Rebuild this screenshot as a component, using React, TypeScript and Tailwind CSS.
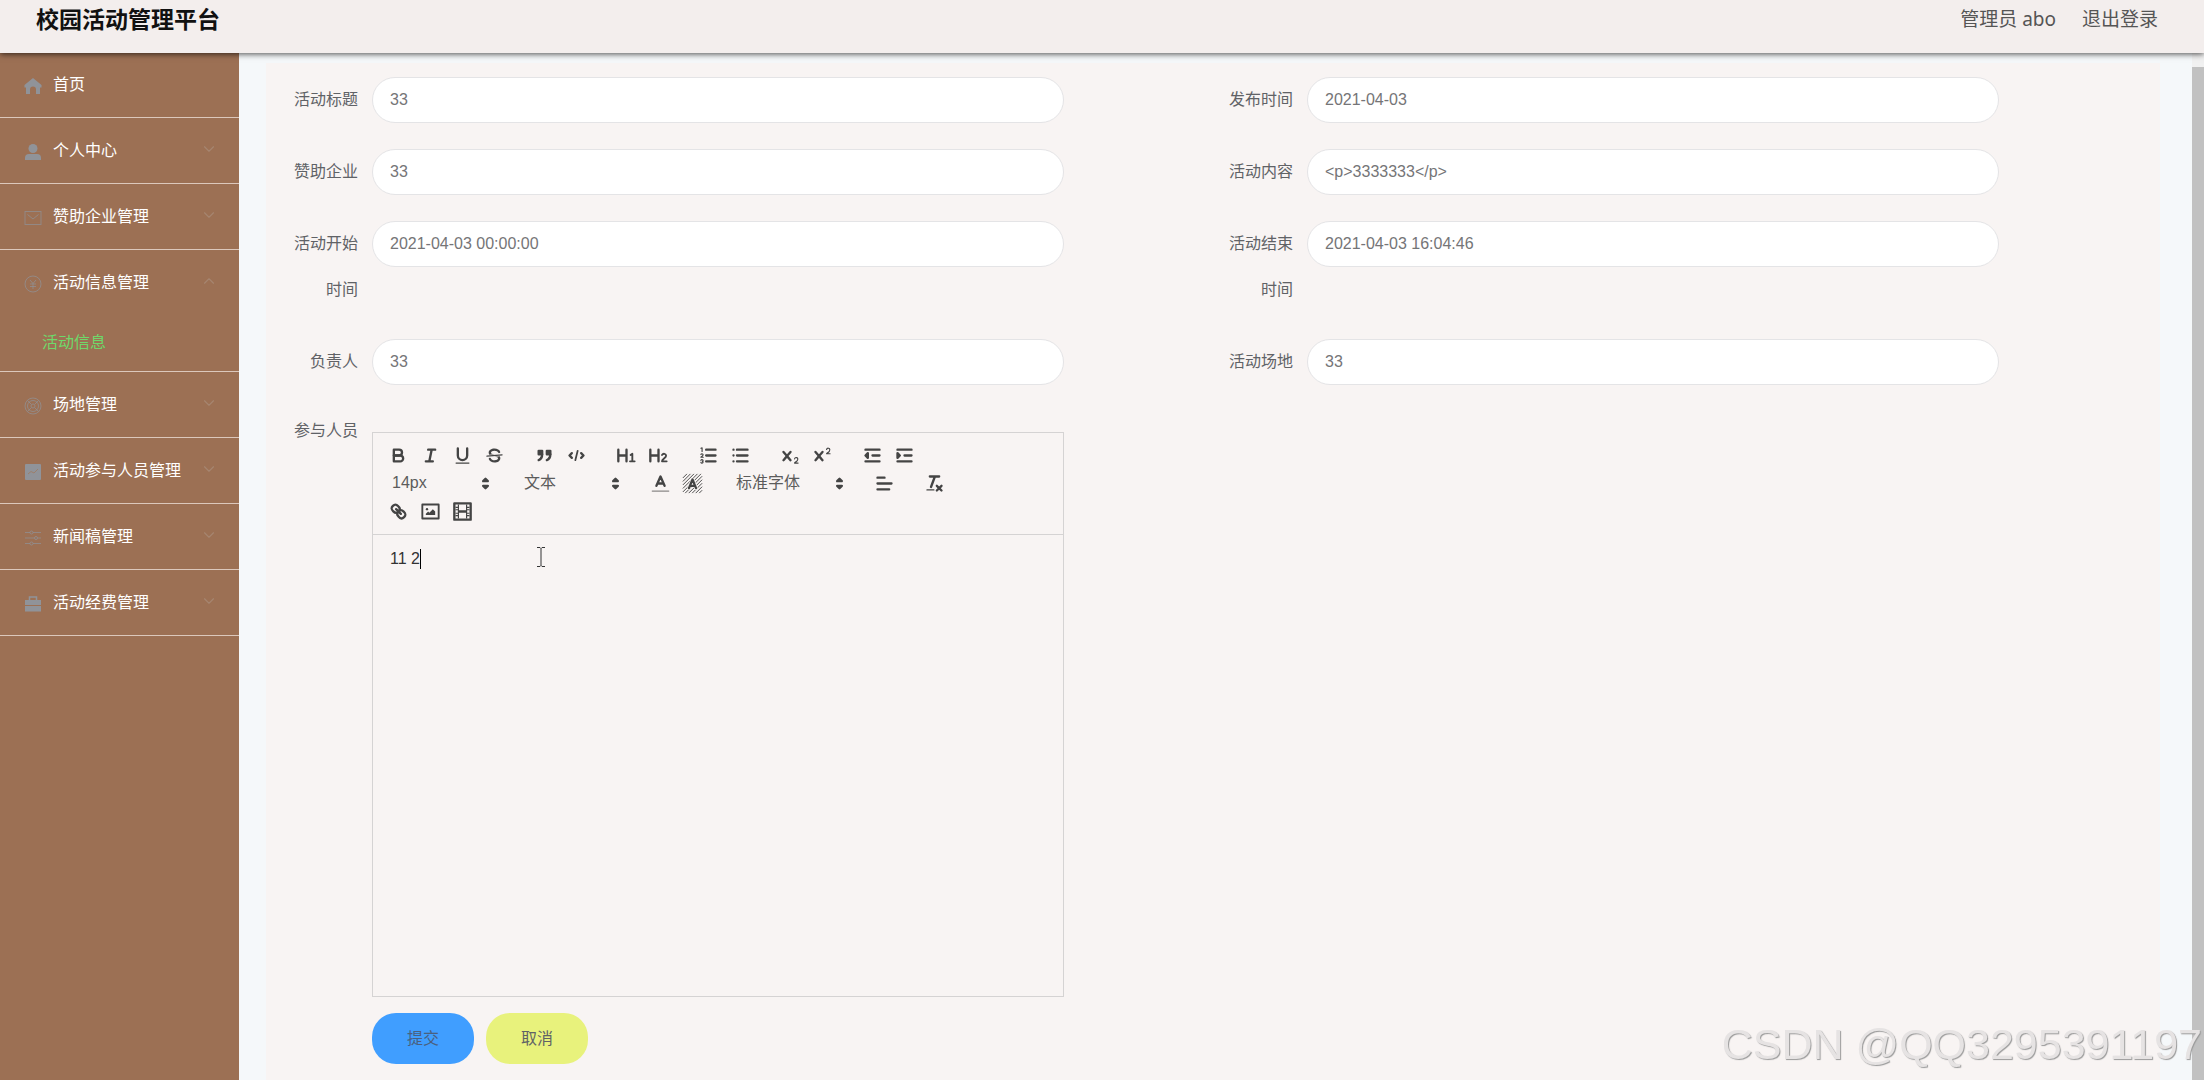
import React from 'react';
import clsx from 'clsx';
import { ChevronDown, ChevronUp } from 'lucide-react';

type IconProps = { children: React.ReactNode; className?: string };

const MenuIcon = ({ children, className }: IconProps) => (
  <svg
    viewBox="0 0 18 18"
    className={clsx('w-[18px] h-[18px] shrink-0 fill-none stroke-current', className)}
    aria-hidden="true"
  >
    {children}
  </svg>
);

const menu = [
  {
    title: '首页',
    icon: (
      <path
        d="M9 1 17.5 8V10.5h-1.5V17h-4v-4.5a3 3 0 0 0-6 0V17H2v-6.5H.5V8Z"
        fill="currentColor"
        stroke="none"
      />
    ),
    solid: true,
    leaf: true,
  },
  {
    title: '个人中心',
    icon: (
      <g fill="currentColor" stroke="none">
        <circle cx="9" cy="5.5" r="4.5" />
        <path d="M1 17v-2a4 4 0 0 1 4-4h8a4 4 0 0 1 4 4v2Z" />
      </g>
    ),
    solid: true,
  },
  {
    title: '赞助企业管理',
    icon: (
      <>
        <rect x="1" y="2.5" width="16" height="13" />
        <path d="m3.5 5.5 5.500 4.500 5.500-4.500" />
      </>
    ),
  },
  {
    title: '活动信息管理',
    icon: (
      <>
        <circle cx="9" cy="9" r="8" />
        <path d="m6 5 3 3.500L12 5M9 8.500V14M6 9h6M6 11.500h6" />
      </>
    ),
    items: ['活动信息'],
  },
  {
    title: '场地管理',
    icon: (
      <>
        <circle cx="9" cy="9" r="8" />
        <circle cx="9" cy="9" r="5.5" />
        <circle cx="9" cy="9" r="2" />
        <path d="M3.500 3.500 7 7M14.500 3.500 11 7M3.500 14.500 7 11M14.500 14.500 11 11" />
      </>
    ),
  },
  {
    title: '活动参与人员管理',
    icon: (
      <>
        <rect x="1" y="1" width="16" height="16" rx="1" fill="currentColor" stroke="none" />
        <path d="m4 11 3-2.500 3 1.500 4-4" stroke="#9c7f6c" />
      </>
    ),
    solid: true,
  },
  {
    title: '新闻稿管理',
    icon: (
      <>
        <path d="M1 3.500h5M9 3.500h8M1 9h9.500M13.500 9H17M1 14.500h5M9 14.500h8" />
        <circle cx="7.5" cy="3.5" r="1.5" />
        <circle cx="12" cy="9" r="1.5" />
        <circle cx="7.5" cy="14.5" r="1.5" />
      </>
    ),
  },
  {
    title: '活动经费管理',
    icon: (
      <>
        <path d="M5.500 5V2h7v3" strokeWidth="1.5" />
        <path d="M1 5h16v5H1ZM1 11h16v5.500H1Z" fill="currentColor" stroke="none" />
      </>
    ),
    solid: true,
  },
];

const Sidebar = () => (
  <nav className="w-[239px] shrink-0 bg-[#9c7054]">
    {menu.map((entry) => {
      const Arrow = entry.items ? ChevronUp : ChevronDown;

      return (
        <div key={entry.title} className="border-b border-[#dcc8bc]">
          <button
            type="button"
            className={clsx(
              'flex w-full items-center pl-6 pr-[21px] text-left text-base text-white',
              entry.leaf ? 'h-16' : 'h-[65px]'
            )}
          >
            <MenuIcon
              className={clsx(
                'mt-0.5 mr-[11px]',
                entry.solid ? 'text-[#909399]' : 'text-[#909399]/70'
              )}
            >
              {entry.icon}
            </MenuIcon>
            <span>{entry.title}</span>
            {!entry.leaf && (
              <Arrow size={18} strokeWidth={1.5} className="mb-1 ml-auto text-[#a68570]" />
            )}
          </button>
          {entry.items?.map((item) => (
            <a
              key={item}
              href="#"
              className="block h-14 pl-[42px] leading-[56px] text-base text-[#6fd86a]"
            >
              {item}
            </a>
          ))}
        </div>
      );
    })}
  </nav>
);

const fields = [
  { id: 'title', label: '活动标题', value: '33' },
  { id: 'publishTime', label: '发布时间', value: '2021-04-03' },
  { id: 'sponsor', label: '赞助企业', value: '33' },
  { id: 'content', label: '活动内容', value: '<p>3333333</p>' },
  { id: 'startTime', label: '活动开始时间', value: '2021-04-03 00:00:00' },
  { id: 'endTime', label: '活动结束时间', value: '2021-04-03 16:04:46' },
  { id: 'owner', label: '负责人', value: '33' },
  { id: 'place', label: '活动场地', value: '33' },
];

const Field = ({ id, label, value }: { id: string; label: string; value: string }) => (
  <div className="flex items-start">
    <label
      htmlFor={id}
      className="w-20 shrink-0 pl-3 text-right text-base leading-[46px] text-[#606266]"
    >
      {label}
    </label>
    <input
      id={id}
      readOnly
      defaultValue={value}
      className="ml-[14px] h-[46px] w-[74%] rounded-full border border-[#e4e4e6] bg-white px-[17px] text-base text-[#757577] outline-none"
    />
  </div>
);

const ToolIcon = ({ children }: { children: React.ReactNode }) => (
  <svg
    viewBox="0 0 18 18"
    className="h-[21px] w-[21px] fill-none stroke-[#444] stroke-2"
    strokeLinecap="round"
    strokeLinejoin="round"
    aria-hidden="true"
  >
    {children}
  </svg>
);

const solid = { fill: '#444', stroke: 'none' };

const cross =
  'M9.65,5.241a1,1,0,0,0-1.409.108L6,7.964,3.759,5.349A1,1,0,0,0,2.192,6.592Q2.215,6.621,2.241,6.649L4.684,9.5,2.241,12.35A1,1,0,0,0,3.71,13.707q.026-.028.049-.057L6,11.036,8.241,13.65a1,1,0,1,0,1.567-1.243Q9.785,12.378,9.759,12.35L7.316,9.5,9.759,6.651A1,1,0,0,0,9.65,5.241Z';

const tools: Record<string, React.ReactNode> = {
  加粗: (
    <>
      <path d="M5,4H9.5A2.5,2.5,0,0,1,12,6.5v0A2.5,2.5,0,0,1,9.5,9H5Z" />
      <path d="M5,9h5.5A2.5,2.5,0,0,1,13,11.5v0A2.5,2.5,0,0,1,10.5,14H5Z" />
    </>
  ),
  斜体: <path d="M7,4H13M5,14H11M8,14L10,4" />,
  下划线: (
    <>
      <path d="M5,3V9a4.012,4.012,0,0,0,4,4H9a4.012,4.012,0,0,0,4-4V3" />
      <rect {...solid} x="3" y="15" width="12" height="1" rx=".5" />
    </>
  ),
  删除线: (
    <>
      <path d="M15.5,8.5L2.5,9.5" strokeWidth="1" />
      <path
        {...solid}
        d="M9.007,8C6.542,7.791,6,7.519,6,6.5,6,5.792,7.283,5,9,5c1.571,0,2.765.679,2.969,1.309a1,1,0,0,0,1.9-.617C13.356,4.106,11.354,3,9,3,6.2,3,4,4.538,4,6.5a3.2,3.2,0,0,0,.5,1.843Z"
      />
      <path
        {...solid}
        d="M8.984,10C11.457,10.208,12,10.479,12,11.5c0,0.708-1.283,1.5-3,1.5-1.571,0-2.765-.679-2.969-1.309a1,1,0,1,0-1.9.617C4.644,13.894,6.646,15,9,15c2.8,0,5-1.538,5-3.5a3.2,3.2,0,0,0-.5-1.843Z"
      />
    </>
  ),
  引用: (
    <g fill="#444">
      <rect x="4" y="5" width="3" height="3" />
      <rect x="11" y="5" width="3" height="3" />
      <path d="M7,8c0,4.031-3,5-3,5" />
      <path d="M14,8c0,4.031-3,5-3,5" />
    </g>
  ),
  代码: (
    <>
      <path d="M5,7L3,9L5,11M13,7L15,9L13,11" />
      <path d="M10,5L8,13" strokeWidth="1.5" />
    </>
  ),
  一级标题: (
    <>
      <path d="M2,4V14M9,4V14M2,9H9" />
      <path d="M12.5,8.5L14,7.500V14M12,14H16" strokeWidth="1.6" />
    </>
  ),
  二级标题: (
    <>
      <path d="M2,4V14M9,4V14M2,9H9" />
      <path d="M12,8.5c1-1.500,3.500-1.200,3.500,.8S12,12,12,14H16" strokeWidth="1.6" />
    </>
  ),
  有序列表: (
    <>
      <path d="M7,4H15M7,9H15M7,14H15" />
      <path
        strokeWidth="1"
        d="M2.5,2.800L3.500,2.500V5.500M4.500,10.500h-2c0-.234,1.85-1.076,1.85-2.234A0.959,0.959,0,0,0,2.5,8.156M2.5,14.846a0.959,0.959,0,0,0,1.85-.109A0.7,0.7,0,0,0,3.75,14a0.688,0.688,0,0,0,.6-0.736,0.959,0.959,0,0,0-1.85-.109"
      />
    </>
  ),
  无序列表: <path d="M6,4H15M6,9H15M6,14H15M3,4H3M3,9H3M3,14H3" />,
  下标: (
    <>
      <path
        {...solid}
        d="M15.5,15H13.861a3.858,3.858,0,0,0,1.914-2.975,1.8,1.8,0,0,0-1.6-1.751A1.921,1.921,0,0,0,12.021,11.7a0.5,0.5,0,1,0,.957.291h0a0.914,0.914,0,0,1,1.053-.725,0.81,0.81,0,0,1,.744.762c0,1.076-1.17,1.87-1.94,2.431A1.456,1.456,0,0,0,12,15.5a0.5,0.5,0,0,0,.5.5h3A0.5,0.5,0,0,0,15.5,15Z"
      />
      <path {...solid} d={cross} />
    </>
  ),
  上标: (
    <>
      <path
        {...solid}
        d="M15.5,7H13.861a4.015,4.015,0,0,0,1.914-2.975,1.8,1.8,0,0,0-1.6-1.751A1.922,1.922,0,0,0,12.021,3.7a0.5,0.5,0,1,0,.957.291,0.917,0.917,0,0,1,1.053-.725,0.81,0.81,0,0,1,.744.762c0,1.077-1.164,1.925-1.934,2.486A1.423,1.423,0,0,0,12,7.5a0.5,0.5,0,0,0,.5.5h3A0.5,0.5,0,0,0,15.5,7Z"
      />
      <path {...solid} d={cross} />
    </>
  ),
  减少缩进: (
    <>
      <path d="M3,14H15M3,4H15M9,9H15" />
      <path d="M5,7V11L3,9Z" fill="#444" />
    </>
  ),
  增加缩进: (
    <>
      <path d="M3,14H15M3,4H15M9,9H15" />
      <path d="M3,7V11L5,9Z" fill="#444" />
    </>
  ),
  文字颜色: (
    <>
      <path d="M2,15.5H16" strokeWidth="1.2" stroke="#8a8888" />
      <path d="M5.5,11L9,3L12.5,11M11.63,9H6.38" />
    </>
  ),
  背景颜色: (
    <>
      <path
        d="M1,4L4,1M1,7L7,1M1,10L10,1M1,13L13,1M1,16L16,1M3,17L17,3M6,17L17,6M9,17L17,9M12,17L17,12M15,17L17,15"
        strokeWidth=".8"
      />
      <path d="M6,13L9,5.500L12,13M11,11H7" stroke="#f8f4f3" strokeWidth="3" />
      <path d="M6,13L9,5.500L12,13M11,11H7" />
    </>
  ),
  对齐: <path d="M3,9H15M3,14H13M3,4H9" />,
  清除格式: (
    <>
      <path d="M5,3H13M6,12L9.35,3M11,11L15,15M15,11L11,15" />
      <rect {...solid} x="2" y="14" width="7" height="1" rx=".5" />
    </>
  ),
  链接: (
    <>
      <path d="M7,7L11,11" />
      <path d="M8.9,4.577a3.476,3.476,0,0,1,.36,4.679A3.476,3.476,0,0,1,4.577,8.9C3.185,7.5,2.035,6.4,4.217,4.217S7.5,3.185,8.9,4.577Z" />
      <path d="M13.423,9.1a3.476,3.476,0,0,0-4.679-.36,3.476,3.476,0,0,0,.36,4.679c1.392,1.392,2.5,2.542,4.679.36S14.815,10.5,13.423,9.1Z" />
    </>
  ),
  图片: (
    <>
      <rect x="2" y="3" width="14" height="12" strokeWidth="1.6" />
      <circle {...solid} cx="6" cy="7" r="1" />
      <path {...solid} d="M5,12V11L7,9L8,10L11,7L13,9V12Z" />
    </>
  ),
  视频: (
    <>
      <rect x="2" y="2" width="14" height="14" />
      <path
        {...solid}
        d="M5,3h1v12H5ZM12,3h1v12H12ZM5,8h8v2H5ZM3,5h3v1H3ZM3,7h3v1H3ZM3,10h3v1H3ZM3,12h3v1H3ZM12,5h3v1H12ZM12,7h3v1H12ZM12,10h3v1H12ZM12,12h3v1H12Z"
      />
    </>
  ),
};

const ToolGroup = ({ names }: { names: string[] }) => (
  <div className="mr-[18px] flex">
    {names.map((name) => (
      <button
        key={name}
        type="button"
        aria-label={name}
        className="flex h-7 w-8 items-center justify-center"
      >
        <ToolIcon>{tools[name]}</ToolIcon>
      </button>
    ))}
  </div>
);

const Picker = ({ label, value, className }: { label: string; value: string; className: string }) => (
  <div className={clsx('relative mr-[18px]', className)}>
    <select
      aria-label={label}
      className="h-7 w-full appearance-none bg-transparent pl-[10px] text-base leading-7 text-[#5c5c5c] outline-none"
    >
      <option>{value}</option>
    </select>
    <span className="pointer-events-none absolute right-0 top-1">
      <ToolIcon>
        <path d="M7,11L9,13L11,11ZM7,7L9,5L11,7Z" fill="#444" />
      </ToolIcon>
    </span>
  </div>
);

const Editor = () => (
  <div className="ml-[14px] mt-0.5 w-[74%] border border-[#d5d3d3]">
    <div className="flex flex-wrap content-start border-b border-[#d5d3d3] px-[9px] pb-[9px] pt-2">
      <ToolGroup names={['加粗', '斜体', '下划线', '删除线']} />
      <ToolGroup names={['引用', '代码']} />
      <ToolGroup names={['一级标题', '二级标题']} />
      <ToolGroup names={['有序列表', '无序列表']} />
      <ToolGroup names={['下标', '上标']} />
      <ToolGroup names={['减少缩进', '增加缩进']} />
      <Picker label="字号" value="14px" className="w-[114px]" />
      <Picker label="段落" value="文本" className="w-28" />
      <ToolGroup names={['文字颜色', '背景颜色']} />
      <Picker label="字体" value="标准字体" className="w-[124px]" />
      <ToolGroup names={['对齐']} />
      <ToolGroup names={['清除格式']} />
      <ToolGroup names={['链接', '图片', '视频']} />
    </div>
    <div
      role="textbox"
      aria-labelledby="members"
      className="relative flex min-h-[461px] items-start px-[17px] pt-[14px] text-base leading-5 text-[#333]"
    >
      <span>11 2</span>
      <span className="h-5 w-px bg-black" />
      {/* mouse pointer */}
      <svg
        viewBox="0 0 10 20"
        className="absolute left-[163px] top-3 h-5 w-[10px] fill-none stroke-[#333]"
        aria-hidden="true"
      >
        <path d="M1 .5h3l1 1 1-1h3M5 1.500v17M1 19.500h3l1-1 1 1h3" />
      </svg>
    </div>
  </div>
);

const App = () => (
  <div className="flex h-screen flex-col overflow-hidden bg-[#f5f8fa] font-['Liberation_Sans','Noto_Sans_CJK_SC',sans-serif]">
    <header className="z-10 flex h-[53px] shrink-0 items-start justify-between bg-[#f3eeed] pl-9 pr-[46px] shadow-[0_1px_6px_rgba(0,0,0,0.7)]">
      <h1 className="text-[23px] font-bold leading-10 text-[#111]">校园活动管理平台</h1>
      <div className="flex gap-[26px] font-['Noto_Sans','Noto_Sans_CJK_SC',sans-serif] text-[19px] leading-[38px] text-[#555]">
        <span>管理员 abo</span>
        <a href="#">退出登录</a>
      </div>
    </header>
    <div className="flex min-h-0 flex-1">
      <Sidebar />
      <main className="min-w-0 flex-1 pl-[27px] pr-8 pt-[10px]">
        <form
          className="min-h-full bg-[#f8f4f3] px-3 pt-[14px]"
          onSubmit={(e) => e.preventDefault()}
        >
          <div className="grid grid-cols-2 gap-y-[26px]">
            {fields.map((field) => (
              <Field key={field.id} {...field} />
            ))}
            <div className="flex items-start pt-[19px]">
              <span
                id="members"
                className="w-20 shrink-0 text-right text-base leading-[1px] text-[#606266]"
              >
                参与人员
              </span>
              <Editor />
            </div>
          </div>
          <div className="flex gap-3 pl-[94px] pt-4 text-base">
            <button
              type="submit"
              className="h-[51px] w-[102px] rounded-[24px] bg-[#409eff] text-[#4a6080]"
            >
              提交
            </button>
            <button
              type="button"
              className="h-[51px] w-[102px] rounded-[24px] bg-[#e8f27c] text-[#606266]"
            >
              取消
            </button>
          </div>
        </form>
      </main>
      {/* scrollbar */}
      <div className="w-3 shrink-0 bg-[#f1f1f1] pt-[14px]">
        <div className="h-full bg-[#c1c1c1]" />
      </div>
    </div>
    <p className="pointer-events-none fixed bottom-3 right-0.5 text-[43px] leading-[48px] text-[#e6e3e3] [text-shadow:1px_1px_1px_#999]">
      CSDN @QQ3295391197
    </p>
  </div>
);

export default App;
